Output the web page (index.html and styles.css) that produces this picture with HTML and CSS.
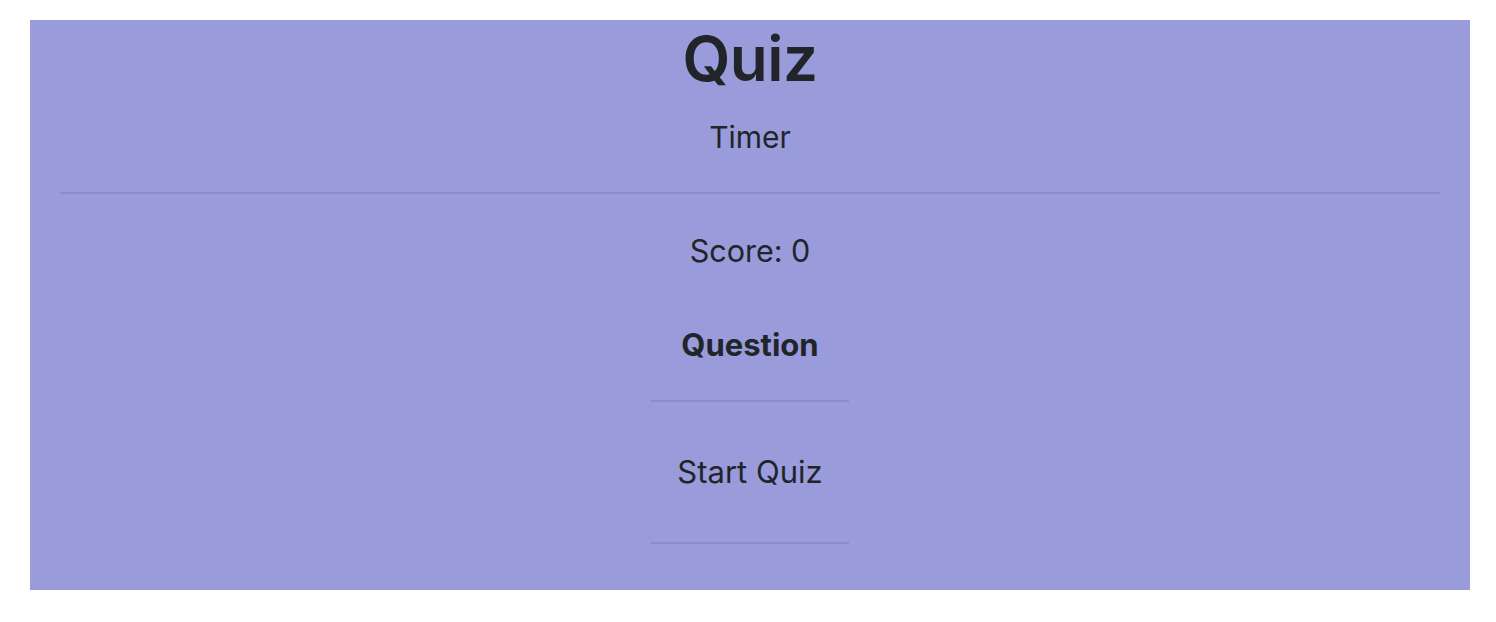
FILE: index.html
```html
<!DOCTYPE html>
<html lang="en">
<head>
<meta charset="utf-8">
<title>Quiz</title>
<link rel="stylesheet" href="styles.css">
</head>
<body>
  <main class="quiz">
    <header class="quiz-header">
      <h1 class="quiz-title">Quiz</h1>
      <p class="quiz-timer">Timer</p>
    </header>
    <hr class="quiz-divider">
    <section class="quiz-body">
      <p class="quiz-score">Score: 0</p>
      <h2 class="quiz-question">Question</h2>
      <div class="quiz-answers">
        <p class="quiz-start">Start Quiz</p>
      </div>
    </section>
  </main>
</body>
</html>
```
FILE: styles.css
```css
* { box-sizing: border-box; }
html, body { margin: 0; padding: 0; background: #ffffff; }
body {
  font-family: Inter, "Noto Sans", "Liberation Sans", sans-serif;
  color: #212529;
  padding: 20px 26px 32px 30px;
}
.quiz {
  background: #9a9bda;
  height: 570px;
  display: flex;
  flex-direction: column;
  align-items: stretch;
}
.quiz-header {
  display: flex;
  flex-direction: column;
  align-items: center;
}
.quiz-title {
  margin: 0;
  font-size: 62px;
  font-weight: 600;
  line-height: 77px;
  letter-spacing: -0.5px;
}
.quiz-timer {
  margin: 18px 0 0;
  font-size: 30px;
  line-height: 45px;
}
.quiz-divider {
  margin: 32px 30px 0;
  border: 0;
  height: 2px;
  background: rgba(0, 0, 0, 0.09);
}
.quiz-body {
  display: flex;
  flex-direction: column;
  align-items: center;
}
.quiz-score {
  margin: 34px 0 0;
  font-size: 30.5px;
  line-height: 45px;
}
.quiz-question {
  margin: 49px 0 0;
  font-size: 31px;
  font-weight: 700;
  line-height: 45px;
}
.quiz-answers {
  margin-top: 33px;
  width: 198px;
  border-top: 2px solid rgba(0, 0, 0, 0.09);
  border-bottom: 2px solid rgba(0, 0, 0, 0.09);
  padding: 47px 0 48px;
  display: flex;
  justify-content: center;
}
.quiz-start {
  margin: 0;
  font-size: 31px;
  line-height: 45px;
}
```
